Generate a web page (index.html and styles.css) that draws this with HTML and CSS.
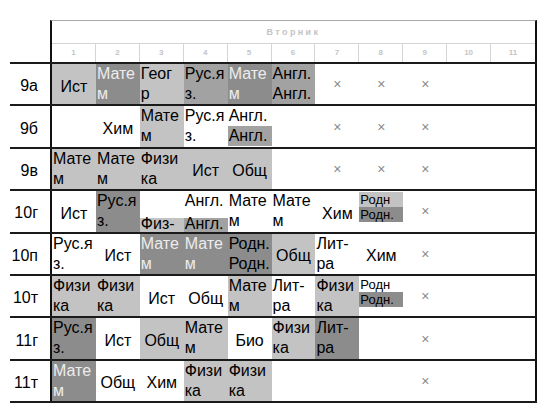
FILE: index.html
```html
<!DOCTYPE html>
<html>
<head>
<meta charset="utf-8">
<link rel="stylesheet" href="styles.css">
</head>
<body>
<div class="sheet">
  <div class="head">
    <div class="day">Вторник</div>
    <div class="nums"><span>1</span><span>2</span><span>3</span><span>4</span><span>5</span><span>6</span><span>7</span><span>8</span><span>9</span><span>10</span><span>11</span></div>
  </div>

  <div class="row">
    <div class="lbl">9а</div>
    <div class="cells">
      <div class="c one L">Ист</div>
      <div class="c two D w">Мате<br>м</div>
      <div class="c two L">Геог<br>р</div>
      <div class="c two M">Рус.я<br>з.</div>
      <div class="c two D w">Мате<br>м</div>
      <div class="c two M">Англ.<br>Англ.</div>
      <div class="c x">×</div><div class="c x">×</div><div class="c x">×</div>
      <div class="c"></div><div class="c"></div>
    </div>
  </div>

  <div class="row">
    <div class="lbl">9б</div>
    <div class="cells">
      <div class="c"></div>
      <div class="c one">Хим</div>
      <div class="c two L">Мате<br>м</div>
      <div class="c two">Рус.я<br>з.</div>
      <div class="c split"><div class="half">Англ.</div><div class="half M">Англ.</div></div>
      <div class="c"></div>
      <div class="c x">×</div><div class="c x">×</div><div class="c x">×</div>
      <div class="c"></div><div class="c"></div>
    </div>
  </div>

  <div class="row">
    <div class="lbl">9в</div>
    <div class="cells">
      <div class="c two L">Мате<br>м</div>
      <div class="c two L">Мате<br>м</div>
      <div class="c two L">Физи<br>ка</div>
      <div class="c one L">Ист</div>
      <div class="c one L">Общ</div>
      <div class="c"></div>
      <div class="c x">×</div><div class="c x">×</div><div class="c x">×</div>
      <div class="c"></div><div class="c"></div>
    </div>
  </div>

  <div class="row">
    <div class="lbl">10г</div>
    <div class="cells">
      <div class="c one">Ист</div>
      <div class="c two D">Рус.я<br>з.</div>
      <div class="c split"><div class="half"></div><div class="low L">Физ-</div></div>
      <div class="c split"><div class="half">Англ.</div><div class="low M">Англ.</div></div>
      <div class="c two">Мате<br>м</div>
      <div class="c two">Мате<br>м</div>
      <div class="c one">Хим</div>
      <div class="c mini"><div class="ma L">Родн</div><div class="mb D">Родн.</div></div>
      <div class="c x">×</div>
      <div class="c"></div><div class="c"></div>
    </div>
  </div>

  <div class="row">
    <div class="lbl">10п</div>
    <div class="cells">
      <div class="c two">Рус.я<br>з.</div>
      <div class="c one">Ист</div>
      <div class="c two D w">Мате<br>м</div>
      <div class="c two D w">Мате<br>м</div>
      <div class="c two D">Родн.<br>Родн.</div>
      <div class="c one L">Общ</div>
      <div class="c two">Лит-<br>ра</div>
      <div class="c one">Хим</div>
      <div class="c x">×</div>
      <div class="c"></div><div class="c"></div>
    </div>
  </div>

  <div class="row">
    <div class="lbl">10т</div>
    <div class="cells">
      <div class="c two L">Физи<br>ка</div>
      <div class="c two L">Физи<br>ка</div>
      <div class="c one">Ист</div>
      <div class="c one">Общ</div>
      <div class="c two L">Мате<br>м</div>
      <div class="c two">Лит-<br>ра</div>
      <div class="c two L">Физи<br>ка</div>
      <div class="c mini"><div class="ma">Родн</div><div class="mb D">Родн.</div></div>
      <div class="c x">×</div>
      <div class="c"></div><div class="c"></div>
    </div>
  </div>

  <div class="row">
    <div class="lbl">11г</div>
    <div class="cells">
      <div class="c two D">Рус.я<br>з.</div>
      <div class="c one">Ист</div>
      <div class="c one L">Общ</div>
      <div class="c two L">Мате<br>м</div>
      <div class="c one">Био</div>
      <div class="c two L">Физи<br>ка</div>
      <div class="c two D">Лит-<br>ра</div>
      <div class="c"></div>
      <div class="c x">×</div>
      <div class="c"></div><div class="c"></div>
    </div>
  </div>

  <div class="row last">
    <div class="lbl">11т</div>
    <div class="cells">
      <div class="c two D w">Мате<br>м</div>
      <div class="c one">Общ</div>
      <div class="c one">Хим</div>
      <div class="c two L">Физи<br>ка</div>
      <div class="c two L">Физи<br>ка</div>
      <div class="c"></div><div class="c"></div><div class="c"></div>
      <div class="c x">×</div>
      <div class="c"></div><div class="c"></div>
    </div>
  </div>
</div>
</body>
</html>
```
FILE: styles.css
```css
html, body {
  margin: 0;
  padding: 0;
  background: #fff;
}
body {
  font-family: "Liberation Sans", Arial, sans-serif;
  color: #000;
}
.sheet {
  margin: 20px 0 0 10px;
  width: 527px;
}
.head {
  margin-left: 40px;
  border-left: 2px solid #111;
  border-right: 2px solid #111;
  border-top: 1px solid #aaa;
}
.day {
  height: 22px;
  line-height: 22px;
  border-bottom: 1px solid #d4d4d4;
  text-align: center;
  font-size: 9px;
  font-weight: bold;
  letter-spacing: 2.4px;
  color: #c4c4c4;
}
.nums {
  display: grid;
  grid-template-columns: repeat(11, 1fr);
  height: 18px;
}
.nums span {
  border-right: 1px solid #d4d4d4;
  text-align: center;
  font-size: 8px;
  font-weight: bold;
  line-height: 18px;
  color: #c4c4c4;
}
.nums span:last-child {
  border-right: none;
}
.row {
  display: grid;
  grid-template-columns: 40px 1fr;
  height: 42.4px;
  box-sizing: border-box;
  border-top: 2px solid #1a1a1a;
}
.row.last {
  height: 44.4px;
  border-bottom: 2px solid #1a1a1a;
}
.lbl {
  display: flex;
  align-items: center;
  justify-content: flex-end;
  padding: 4px 12px 0 0;
  font-size: 16px;
}
.cells {
  display: grid;
  grid-template-columns: repeat(11, 1fr);
  border-left: 2px solid #111;
  border-right: 2px solid #111;
}
.c {
  overflow: hidden;
  white-space: nowrap;
  font-size: 16px;
  line-height: 20px;
  min-width: 0;
}
.two {
  padding-left: 1px;
}
.one {
  display: flex;
  align-items: center;
  justify-content: center;
  padding-top: 5px;
}
.x {
  display: flex;
  align-items: center;
  justify-content: center;
  font-size: 14px;
  color: #8a8a8a;
}
.L { background: #c3c3c3; }
.M { background: #a2a2a2; }
.D { background: #8c8c8c; }
.w { color: #ececec; }
.split {
  display: flex;
  flex-direction: column;
}
.half {
  height: 20px;
  padding-left: 1px;
}
.low {
  margin-top: auto;
  height: 14px;
  line-height: 12px;
  padding-left: 1px;
}
.mini {
  display: flex;
  flex-direction: column;
  padding-top: 1px;
}
.ma {
  height: 15px;
  line-height: 15px;
  font-size: 13px;
  padding-left: 1px;
}
.mb {
  height: 15px;
  line-height: 15px;
  font-size: 13px;
  padding-left: 1px;
}
```
